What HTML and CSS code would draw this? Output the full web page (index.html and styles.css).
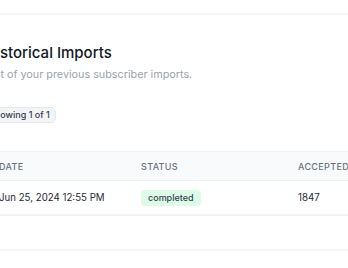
FILE: index.html
```html
<!DOCTYPE html>
<html>
<head>
<meta charset="utf-8">
<link rel="stylesheet" href="styles.css">
</head>
<body>
<div class="page">
  <div class="divider"></div>
  <section class="section">
    <div class="intro">
      <h2 class="title">Historical Imports</h2>
      <p class="subtitle">A list of your previous subscriber imports.</p>
      <span class="count">Showing 1 of 1</span>
    </div>
    <table class="table">
      <thead>
        <tr>
          <th class="col-date">Date</th>
          <th class="col-status">Status</th>
          <th class="col-accepted">Accepted</th>
        </tr>
      </thead>
      <tbody>
        <tr>
          <td>Jun 25, 2024 12:55 PM</td>
          <td><span class="pill">completed</span></td>
          <td>1847</td>
        </tr>
      </tbody>
    </table>
    <div class="footer"></div>
  </section>
</div>
</body>
</html>
```
FILE: styles.css
```css
html, body {
  margin: 0;
  padding: 0;
  background: #ffffff;
  font-family: Inter, "Noto Sans", sans-serif;
  color: #111827;
  overflow: hidden;
}
.page {
  margin-left: -21px;
  padding-top: 13px;
  width: 420px;
}
.divider {
  height: 2px;
  background: #f3f4f6;
}
.intro {
  display: flex;
  flex-direction: column;
  align-items: flex-start;
  padding-top: 28px;
}
.title {
  margin: 0 0 0 6px;
  font-size: 15px;
  font-weight: 500;
  line-height: 20px;
  color: #111827;
}
.subtitle {
  margin: 4px 0 0 0;
  font-size: 10.8px;
  line-height: 16px;
  color: #9ca3af;
}
.count {
  margin-top: 24px;
  padding: 1px 5px 1px 9px;
  font-size: 9px;
  line-height: 12px;
  font-weight: 500;
  color: #374151;
  background: #f3f4f6;
  border: 1px solid #e5e7eb;
  border-radius: 5px;
}
.table {
  margin-top: 28px;
  width: 100%;
  border-collapse: collapse;
}
.table th {
  background: #f9fafb;
  border-top: 1px solid #f0f1f3;
  border-bottom: 1px solid #f0f1f3;
  height: 28px;
  padding: 0 0 0 20px;
  text-align: left;
  font-size: 9px;
  font-weight: 500;
  letter-spacing: 0.04em;
  text-transform: uppercase;
  color: #6b7280;
}
.table td {
  height: 33px;
  padding: 0 0 0 20px;
  font-size: 9.7px;
  color: #1f2937;
  border-bottom: 2px solid #f3f4f6;
}
.col-date { width: 122px; }
.col-status { width: 137px; }
.pill {
  display: inline-block;
  padding: 2px 7px;
  font-size: 9px;
  line-height: 12px;
  font-weight: 500;
  color: #374151;
  background: #dcfce7;
  border-radius: 4px;
}
.footer {
  height: 33px;
  border-bottom: 2px solid #f3f4f6;
}
```
